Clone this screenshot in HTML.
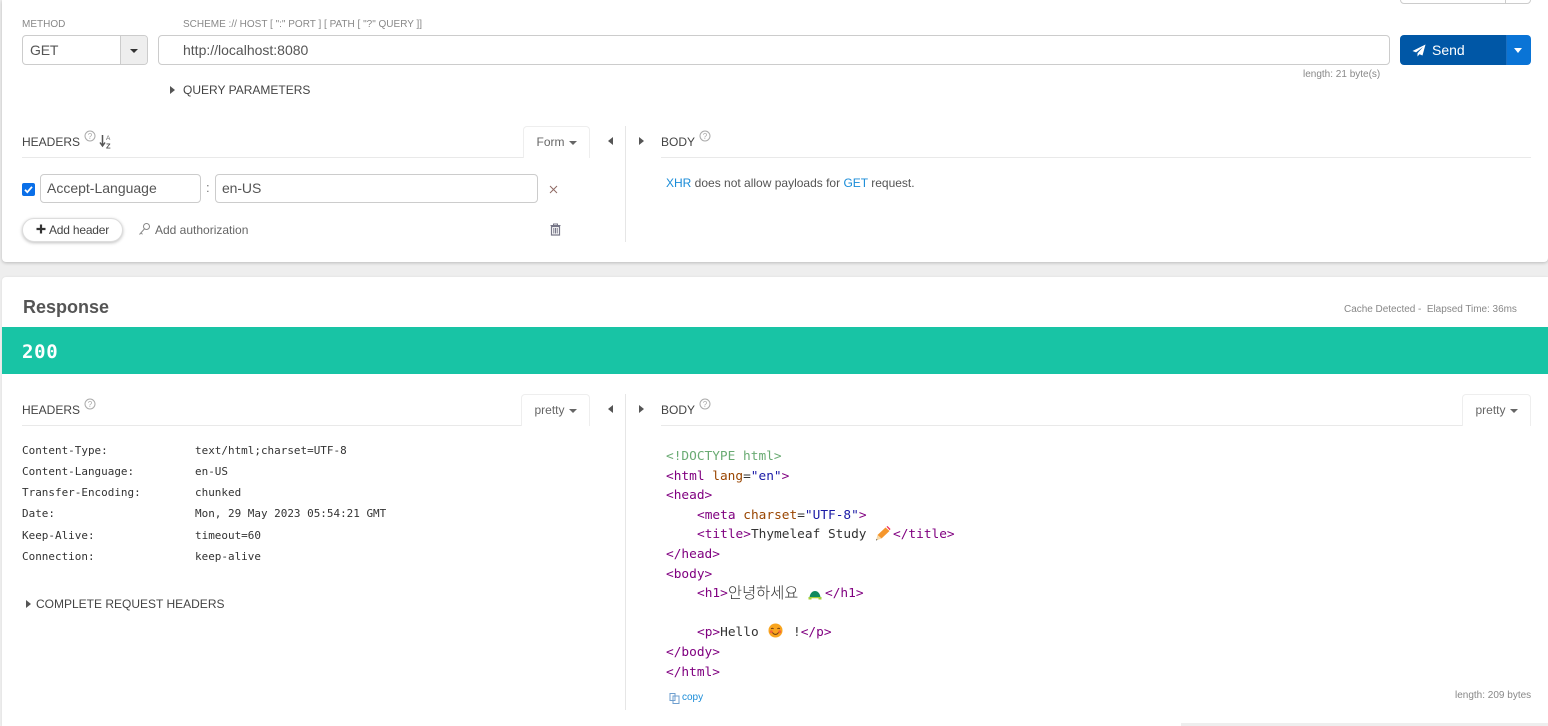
<!DOCTYPE html>
<html lang="en"><head><meta charset="utf-8"><title>Response</title>
<style>
html,body{margin:0;padding:0;width:1548px;height:726px;overflow:hidden;background:#eee}
body{position:relative;font-family:"Liberation Sans","Noto Sans CJK KR",sans-serif;color:#555}
.a{position:absolute;white-space:nowrap}
.t{position:absolute;white-space:nowrap;line-height:20px;height:20px}
.card{position:absolute;background:#fff}
.inp{position:absolute;box-sizing:border-box;border:1px solid #ccc;border-radius:4px;background:#fff;color:#555;font-size:14px;line-height:29px;white-space:nowrap}
.h{font-size:12px;color:#444}
.hr{position:absolute;height:1px;background:#e9e9e9}
.v{position:absolute;width:1px;background:#e6e6e6}
.tab{position:absolute;box-sizing:border-box;border:1px solid #eee;border-bottom:0;border-radius:4px 4px 0 0;background:#fff;font-size:12px;color:#666;line-height:31px;text-align:center}
.caret{display:inline-block;width:0;height:0;border-left:4px solid transparent;border-right:4px solid transparent;border-top:4px solid #666;vertical-align:1px;margin-left:4px}
.tr{position:absolute;width:0;height:0;border-top:4px solid transparent;border-bottom:4px solid transparent}
.m{font-family:"DejaVu Sans Mono","Liberation Mono",monospace}
.rh{font-size:10.96px;color:#333}
.code{font-size:12.8px;color:#333}
.tag{color:#800080}.att{color:#994500}.val{color:#1a1aa6}
svg{position:absolute;display:block}
</style></head>
<body>
<div class="card" style="left:2px;top:0;width:1546px;height:262px;border-radius:0 0 4px 4px;box-shadow:0 1px 3px rgba(0,0,0,.22)"></div>
<div class="card" style="left:2px;top:277px;width:1546px;height:449px;border-radius:4px 0 0 0;box-shadow:0 0 2px rgba(0,0,0,.08)"></div>
<div class="a" style="left:1181px;top:723px;width:367px;height:3px;background:#eee"></div>

<div class="a" style="left:1400px;top:-10px;width:131px;height:14px;box-sizing:border-box;border:1px solid #ccc;border-radius:4px"></div>
<div class="a" style="left:1505px;top:-10px;width:1px;height:14px;background:#ccc"></div>

<div class="t" style="left:22px;top:15px;font-size:10px;color:#888">METHOD</div>
<div class="t" style="left:183px;top:15px;font-size:10px;color:#888">SCHEME :// HOST [ ":" PORT ] [ PATH [ "?" QUERY ]]</div>

<div class="inp" style="left:22px;top:35px;width:126px;height:30px;padding-left:7px;letter-spacing:-.2px">GET</div>
<div class="a" style="left:120px;top:36px;width:27px;height:28px;background:#eee;border-left:1px solid #ccc;border-radius:0 3px 3px 0;box-sizing:border-box"></div>
<div class="a" style="left:130px;top:49px;width:0;height:0;border-left:4px solid transparent;border-right:4px solid transparent;border-top:4px solid #333"></div>

<div class="inp" style="left:158px;top:35px;width:1232px;height:30px;padding-left:24px">http://localhost:8080</div>

<div class="a" style="left:1400px;top:35px;width:106px;height:30px;background:#0057a6;border-radius:4px 0 0 4px"></div>
<div class="a" style="left:1506px;top:35px;width:25px;height:30px;background:#0a74d6;border-left:1px solid #1b6fc0;box-sizing:border-box;border-radius:0 4px 4px 0"></div>
<div class="a" style="left:1514px;top:48px;width:0;height:0;border-left:4.500px solid transparent;border-right:4.500px solid transparent;border-top:5px solid #fff"></div>
<svg style="left:1412px;top:44px" width="14" height="13" viewBox="0 0 14 13"><path d="M13.500 .5 0.500 7l3.600 1.400L11 3 5.500 9.300v3.200l2-2.200 3 1.200z" fill="#fff"/></svg>
<div class="t" style="left:1432px;top:40px;font-size:14px;color:#fff">Send</div>
<div class="t" style="left:1303px;top:65px;font-size:10px;color:#888">length: 21 byte(s)</div>

<div class="a" style="left:170px;top:86px;width:0;height:0;border-top:4px solid transparent;border-bottom:4px solid transparent;border-left:5px solid #555"></div>
<div class="t h" style="left:183px;top:80px">QUERY PARAMETERS</div>

<!-- Request headers -->
<div class="t h" style="left:22px;top:132px">HEADERS</div>
<svg style="left:84px;top:130px" width="12" height="12" viewBox="0 0 12 12"><circle cx="6" cy="6" r="5" fill="none" stroke="#aaa"/><text x="6" y="8.800" font-size="8" text-anchor="middle" fill="#aaa" font-family="Liberation Sans">?</text></svg>
<svg style="left:99px;top:134px" width="13" height="15" viewBox="0 0 13 15"><path d="M3.500 1v10M1 8.500l2.500 3.500 2.500-3.500" fill="none" stroke="#555" stroke-width="1.500"/><text x="7" y="6" font-size="6.500" fill="#666" font-family="Liberation Sans">A</text><text x="7" y="14.500" font-size="7.500" font-weight="bold" fill="#555" font-family="Liberation Sans">Z</text></svg>
<div class="hr" style="left:22px;top:157px;width:568px"></div>
<div class="tab" style="left:523px;top:126px;width:67px;height:32px">Form<span class="caret"></span></div>
<div class="v" style="left:625px;top:126px;height:116px"></div>
<div class="tr" style="left:608px;top:137px;border-right:5px solid #555"></div>
<div class="tr" style="left:639px;top:137px;border-left:5px solid #555"></div>
<div class="t h" style="left:661px;top:132px">BODY</div>
<svg style="left:699px;top:130px" width="12" height="12" viewBox="0 0 12 12"><circle cx="6" cy="6" r="5" fill="none" stroke="#aaa"/><text x="6" y="8.800" font-size="8" text-anchor="middle" fill="#aaa" font-family="Liberation Sans">?</text></svg>
<div class="hr" style="left:661px;top:157px;width:870px"></div>

<div class="a" style="left:22px;top:183px;width:13px;height:13px;background:#0a6fe8;border-radius:2px"></div>
<svg style="left:22px;top:183px" width="13" height="13" viewBox="0 0 13 13"><path d="M3 6.800 5.300 9.200 10 3.800" fill="none" stroke="#fff" stroke-width="1.800"/></svg>
<div class="inp" style="left:40px;top:174px;width:161px;height:29px;padding-left:6px;line-height:27px">Accept-Language</div>
<div class="t" style="left:206px;top:178px;font-size:13px;color:#777">:</div>
<div class="inp" style="left:215px;top:174px;width:323px;height:29px;padding-left:6px;line-height:27px;letter-spacing:-.1px">en-US</div>
<svg style="left:549px;top:185px" width="9" height="9" viewBox="0 0 9 9"><path d="M1 1l7 7M8 1 1 8" stroke="#8f6a64" stroke-width="1" fill="none"/></svg>

<div class="a" style="left:22px;top:218px;width:101px;height:24px;box-sizing:border-box;background:#fff;border:1px solid #ddd;border-radius:12px;box-shadow:0 1px 3px rgba(0,0,0,.25)"></div>
<svg style="left:36px;top:224px" width="10" height="10" viewBox="0 0 10 10"><path d="M5 .5v9M.5 5h9" stroke="#333" stroke-width="2.200"/></svg>
<div class="t" style="left:49px;top:220px;font-size:12px;color:#444;letter-spacing:-.2px">Add header</div>
<svg style="left:138px;top:222px" width="13" height="14" viewBox="0 0 13 14"><circle cx="8.500" cy="4.500" r="3" fill="none" stroke="#888"/><path d="M6.500 6.800 1.500 12.500M3 10.800l1.500 1.500" stroke="#888" fill="none"/></svg>
<div class="t" style="left:155px;top:220px;font-size:12px;color:#666">Add authorization</div>
<svg style="left:550px;top:223px" width="11" height="13" viewBox="0 0 11 13"><path d="M0.500 2.500h10M3.500 2.500V1h4v1.500" stroke="#778" fill="none"/><path d="M1.500 3.500h8v8.500h-8z" fill="none" stroke="#778" stroke-width="1.200"/><path d="M3.800 5v5.500M5.500 5v5.500M7.200 5v5.500" stroke="#778"/></svg>

<div class="t" style="left:666px;top:173px;font-size:12px;color:#555"><span style="color:#1a8cd8">XHR</span> does not allow payloads for <span style="color:#1a8cd8">GET</span> request.</div>

<!-- Response -->
<div class="t" style="left:23px;top:297px;font-size:18px;font-weight:bold;color:#555">Response</div>
<div class="t" style="left:1344px;top:300px;font-size:10px;color:#888;letter-spacing:-.03px">Cache Detected -&nbsp; Elapsed Time: 36ms</div>
<div class="a" style="left:2px;top:327px;width:1546px;height:47px;background:#18c4a5"></div>
<div class="t m" style="left:22px;top:342px;font-size:19px;font-weight:bold;color:#fff;letter-spacing:.7px">200</div>

<div class="t h" style="left:22px;top:400px">HEADERS</div>
<svg style="left:84px;top:398px" width="12" height="12" viewBox="0 0 12 12"><circle cx="6" cy="6" r="5" fill="none" stroke="#aaa"/><text x="6" y="8.800" font-size="8" text-anchor="middle" fill="#aaa" font-family="Liberation Sans">?</text></svg>
<div class="hr" style="left:22px;top:425px;width:568px"></div>
<div class="tab" style="left:521px;top:394px;width:69px;height:32px">pretty<span class="caret"></span></div>
<div class="v" style="left:625px;top:394px;height:316px"></div>
<div class="tr" style="left:608px;top:405px;border-right:5px solid #555"></div>
<div class="tr" style="left:639px;top:405px;border-left:5px solid #555"></div>
<div class="t h" style="left:661px;top:400px">BODY</div>
<svg style="left:699px;top:398px" width="12" height="12" viewBox="0 0 12 12"><circle cx="6" cy="6" r="5" fill="none" stroke="#aaa"/><text x="6" y="8.800" font-size="8" text-anchor="middle" fill="#aaa" font-family="Liberation Sans">?</text></svg>
<div class="hr" style="left:661px;top:425px;width:870px"></div>
<div class="tab" style="left:1462px;top:394px;width:69px;height:32px">pretty<span class="caret"></span></div>

<div class="t m rh" style="left:22px;top:441px">Content-Type:</div><div class="t m rh" style="left:195px;top:441px">text/html;charset=UTF-8</div>
<div class="t m rh" style="left:22px;top:462px">Content-Language:</div><div class="t m rh" style="left:195px;top:462px">en-US</div>
<div class="t m rh" style="left:22px;top:483px">Transfer-Encoding:</div><div class="t m rh" style="left:195px;top:483px">chunked</div>
<div class="t m rh" style="left:22px;top:504px">Date:</div><div class="t m rh" style="left:195px;top:504px">Mon, 29 May 2023 05:54:21 GMT</div>
<div class="t m rh" style="left:22px;top:526px">Keep-Alive:</div><div class="t m rh" style="left:195px;top:526px">timeout=60</div>
<div class="t m rh" style="left:22px;top:547px">Connection:</div><div class="t m rh" style="left:195px;top:547px">keep-alive</div>

<div class="a" style="left:26px;top:600px;width:0;height:0;border-top:4px solid transparent;border-bottom:4px solid transparent;border-left:5px solid #555"></div>
<div class="t h" style="left:36px;top:594px">COMPLETE REQUEST HEADERS</div>

<div class="t m code" style="left:666px;top:447px;color:#6aab73">&lt;!DOCTYPE html&gt;</div>
<div class="t m code" style="left:666px;top:467px"><span class="tag">&lt;html</span> <span class="att">lang</span>=<span class="val">"en"</span><span class="tag">&gt;</span></div>
<div class="t m code tag" style="left:666px;top:486px">&lt;head&gt;</div>
<div class="t m code" style="left:697px;top:506px"><span class="tag">&lt;meta</span> <span class="att">charset</span>=<span class="val">"UTF-8"</span><span class="tag">&gt;</span></div>
<div class="t m code" style="left:697px;top:525px"><span class="tag">&lt;title&gt;</span>Thymeleaf Study</div>
<svg style="left:875px;top:526px" width="16" height="15" viewBox="0 0 16 15"><path d="M2.500 9 10.500 1.500l4 3.500-8 7.500z" fill="#f5962c"/><path d="M11.500 .7l1-.7 3 3-.8 1.200z" fill="#ee2f5c"/><path d="M2.500 9 1 14.500l5.500-2z" fill="#f7d9a8"/><path d="M1.500 13 1 14.500l1.500-.6z" fill="#333"/></svg>
<div class="t m code tag" style="left:893px;top:525px">&lt;/title&gt;</div>
<div class="t m code tag" style="left:666px;top:545px">&lt;/head&gt;</div>
<div class="t m code tag" style="left:666px;top:565px">&lt;body&gt;</div>
<div class="t m code tag" style="left:697px;top:584px">&lt;h1&gt;</div>
<div class="t" style="left:728px;top:582px;font-size:15.300px;color:#333;font-family:'Noto Sans CJK KR','NanumGothic',sans-serif;font-weight:300">안녕하세요</div>
<svg style="left:808px;top:590px" width="14" height="10" viewBox="0 0 14 10"><path d="M1.500 7.500C2 3 4.500 1 7 1s5 2 5.500 6.500z" fill="#0f8a5f"/><path d="M.5 7h13v2.500h-3V8.300H3.500v1.200H.5z" fill="#a6cf3a"/></svg>
<div class="t m code tag" style="left:825px;top:584px">&lt;/h1&gt;</div>
<div class="t m code" style="left:697px;top:623px"><span class="tag">&lt;p&gt;</span>Hello</div>
<svg style="left:768px;top:623px" width="15" height="15" viewBox="0 0 15 15"><circle cx="7.500" cy="7.500" r="7" fill="#f9a51e"/><circle cx="3.300" cy="8.800" r="1.500" fill="#f2663a"/><circle cx="11.700" cy="8.800" r="1.500" fill="#f2663a"/><path d="M3.200 6c.6-1 1.700-1 2.300 0M9.500 6c.6-1 1.700-1 2.300 0M4.500 9.500c1.500 2.500 4.500 2.500 6 0" fill="none" stroke="#6b3a12" stroke-width="1"/></svg>
<div class="t m code" style="left:793px;top:623px">!<span class="tag">&lt;/p&gt;</span></div>
<div class="t m code tag" style="left:666px;top:643px">&lt;/body&gt;</div>
<div class="t m code tag" style="left:666px;top:663px">&lt;/html&gt;</div>

<svg style="left:669px;top:692px" width="11" height="12" viewBox="0 0 11 12"><path d="M1 1.500h5v7H1zM4 4h6v7.500H4z" fill="#fff" stroke="#6f9fcf" stroke-width="1"/></svg>
<div class="t" style="left:682px;top:688px;font-size:10px;color:#1a8cd8">copy</div>
<div class="t" style="left:1455px;top:686px;font-size:10px;color:#888">length: 209 bytes</div>
</body></html>
